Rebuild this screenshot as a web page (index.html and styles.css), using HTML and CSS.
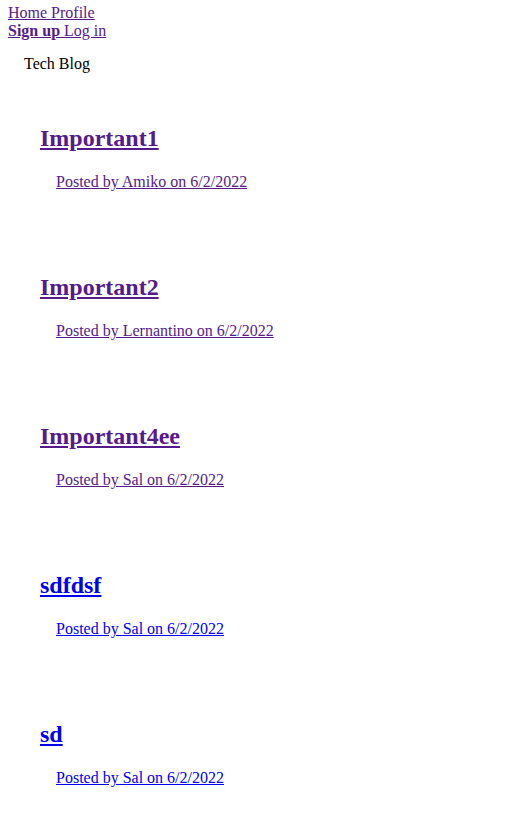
FILE: index.html
```html
<!DOCTYPE html>
<html>
<head>
<meta charset="utf-8">
<title>Tech Blog</title>
<link rel="stylesheet" href="styles.css">
</head>
<body>
<nav class="nav"><a class="visited" href="#">Home </a><a class="visited" href="#">Profile</a></nav>
<div class="auth"><a class="visited signup" href="#">Sign up </a><a class="visited" href="#">Log in</a></div>
<header class="site-title">Tech Blog</header>
<main class="posts">
  <section class="post">
    <h2 class="post-title"><a class="visited" href="#">Important1</a></h2>
    <p class="post-meta"><a class="visited" href="#">Posted by Amiko on 6/2/2022</a></p>
  </section>
  <section class="post">
    <h2 class="post-title"><a class="visited" href="#">Important2</a></h2>
    <p class="post-meta"><a class="visited" href="#">Posted by Lernantino on 6/2/2022</a></p>
  </section>
  <section class="post">
    <h2 class="post-title"><a class="visited" href="#">Important4ee</a></h2>
    <p class="post-meta"><a class="visited" href="#">Posted by Sal on 6/2/2022</a></p>
  </section>
  <section class="post">
    <h2 class="post-title"><a class="link" href="#">sdfdsf</a></h2>
    <p class="post-meta"><a class="link" href="#">Posted by Sal on 6/2/2022</a></p>
  </section>
  <section class="post">
    <h2 class="post-title"><a class="link" href="#">sd</a></h2>
    <p class="post-meta"><a class="link" href="#">Posted by Sal on 6/2/2022</a></p>
  </section>
</main>
</body>
</html>
```
FILE: styles.css
```css
body {
  margin: 4px 8px 8px;
  font-family: "Liberation Serif", "Times New Roman", serif;
  font-size: 16px;
  color: #000;
  background: #fff;
}
a { text-decoration: underline; }
.visited { color: #551a8b; }
.link { color: #0000ee; }
.signup { font-weight: bold; }
.site-title {
  padding: 15px 16px 1px;
}
.posts {
  padding: 0 16px;
}
.post {
  margin: 15px 0;
  padding: 16px;
}
.post-title {
  font-size: 24px;
  font-weight: bold;
  margin: 20px 0 21px;
}
.post-meta {
  margin: 16px 0;
  padding-left: 16px;
}
```
